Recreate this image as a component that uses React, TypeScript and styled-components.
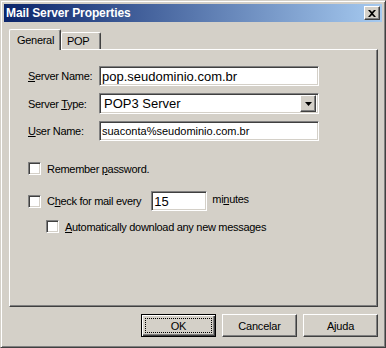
import React from 'react'
import styled, { createGlobalStyle, css } from 'styled-components'

const face = '#d4d0c8'
const shadow = '#808080'
const darkShadow = '#404040'
const uiFont = `'Liberation Sans', Arial, sans-serif`

const GlobalStyle = createGlobalStyle`
	html, body {
		margin: 0;
		padding: 0;
		background: ${face};
	}
	* {
		box-sizing: border-box;
	}
`

const raised = css`
	border: 1px solid;
	border-color: #fff ${darkShadow} ${darkShadow} #fff;
	box-shadow: inset -1px -1px ${shadow}, inset 1px 1px ${face};
`

const sunken = css`
	border: 1px solid;
	border-color: ${shadow} #fff #fff ${shadow};
	box-shadow: inset 1px 1px ${darkShadow}, inset -1px -1px ${face};
`

const Window = styled.div`
	width: 386px;
	height: 348px;
	display: flex;
	flex-direction: column;
	padding: 3px;
	background: ${face};
	border: 1px solid;
	border-color: ${face} ${darkShadow} ${darkShadow} ${face};
	box-shadow: inset 1px 1px #fff, inset -1px -1px ${shadow};
	font-family: ${uiFont};
	font-size: 11px;
	color: #000;
`

const TitleBar = styled.div`
	height: 18px;
	display: flex;
	align-items: center;
	justify-content: space-between;
	padding: 0 2px 0 2px;
	background: linear-gradient(to right, #0a246a, #a6caf0);
`

const TitleText = styled.span`
	color: #fff;
	font-weight: bold;
	font-size: 12px;
	letter-spacing: -0.1px;
`

const CloseButton = styled.button`
	${raised};
	width: 16px;
	height: 14px;
	padding: 0;
	background: ${face};
	display: flex;
	align-items: center;
	justify-content: center;
`

const Body = styled.div`
	flex: 1;
	display: flex;
	flex-direction: column;
	padding: 7px 4px 0 5px;
`

const TabStrip = styled.div`
	display: flex;
	align-items: flex-end;
	height: 20px;
	position: relative;
	z-index: 1;
`

const Tab = styled.div<{ $active?: boolean; $width: number }>`
	width: ${(p) => p.$width}px;
	height: ${(p) => (p.$active ? 21 : 17)}px;
	margin-bottom: ${(p) => (p.$active ? -1 : 0)}px;
	padding: ${(p) => (p.$active ? '4px 0 0 7px' : '2px 0 0 5px')};
	background: ${face};
	border-top: 1px solid #fff;
	border-left: 1px solid #fff;
	border-right: 1px solid ${darkShadow};
	border-top-left-radius: 2px;
	border-top-right-radius: 2px;
	box-shadow: inset -1px 0 ${shadow};
	letter-spacing: -0.3px;
	position: relative;
	z-index: ${(p) => (p.$active ? 2 : 1)};
`

const Panel = styled.div`
	height: 258px;
	padding: 16px 0 0 18px;
	border: 1px solid;
	border-color: #fff ${darkShadow} ${darkShadow} #fff;
	box-shadow: inset -1px -1px ${shadow};
`

const FormGrid = styled.div`
	display: grid;
	grid-template-columns: 71px 220px;
	row-gap: 7px;
	align-items: center;
`

const Label = styled.span`
	letter-spacing: -0.3px;
	white-space: nowrap;
`

const Key = styled.span`
	text-decoration: underline;
`

const TextField = styled.input<{ $size: number; $width?: number }>`
	${sunken};
	width: ${(p) => (p.$width ? `${p.$width}px` : '100%')};
	height: 20px;
	margin: 0;
	padding: 0 2px 0 2px;
	background: #fff;
	font-family: ${uiFont};
	font-size: ${(p) => p.$size}px;
	color: #000;
	outline: none;
`

const IntervalField = styled(TextField)`
	margin-left: 4px;
`

const SelectBox = styled.div`
	${sunken};
	height: 21px;
	display: flex;
	align-items: center;
	justify-content: space-between;
	padding: 2px 2px 2px 4px;
	background: #fff;
	font-size: 13px;
`

const DropButton = styled.span`
	${raised};
	width: 16px;
	height: 17px;
	background: ${face};
	display: flex;
	align-items: center;
	justify-content: center;
`

const Checks = styled.div`
	display: flex;
	flex-direction: column;
	margin-top: 21px;
`

const CheckRow = styled.div<{ $indent?: number; $gap?: number }>`
	display: flex;
	align-items: center;
	gap: 6px;
	margin-left: ${(p) => p.$indent ?? 0}px;
	margin-top: ${(p) => p.$gap ?? 0}px;
	min-height: 13px;
`

const CheckBox = styled.span`
	${sunken};
	width: 13px;
	height: 13px;
	flex: none;
	background: #fff;
`

const MinutesLabel = styled(Label)`
	margin-left: -1px;
	padding-bottom: 4px;
`

const ButtonRow = styled.div`
	display: flex;
	justify-content: flex-end;
	gap: 6px;
	margin-top: 7px;
`

const Button = styled.button<{ $default?: boolean }>`
	width: 75px;
	height: 23px;
	padding: 0;
	background: ${face};
	font-family: ${uiFont};
	font-size: 11px;
	color: #000;
	letter-spacing: -0.2px;
	display: flex;
	align-items: center;
	justify-content: center;
	${(p) =>
		p.$default
			? css`
					border: 1px solid #000;
					box-shadow: inset 1px 1px #fff, inset -1px -1px ${darkShadow}, inset -2px -2px ${shadow};
				`
			: raised};
`

const FocusRing = styled.span`
	width: 67px;
	height: 15px;
	border: 1px dotted #000;
	display: flex;
	align-items: center;
	justify-content: center;
`

const CloseGlyph = () => (
	<svg width='8' height='7' viewBox='0 0 8 7'>
		<path d='M0 0h2l2 2 2-2h2L5 3.5 8 7H6L4 5 2 7H0l3-3.5z' fill='#000' />
	</svg>
)

const ArrowGlyph = () => (
	<svg width='7' height='4' viewBox='0 0 7 4'>
		<path d='M0 0h7L3.5 4z' fill='#000' />
	</svg>
)

export default function App() {
	return (
		<>
			<GlobalStyle />
			<Window>
				<TitleBar>
					<TitleText>Mail Server Properties</TitleText>
					<CloseButton aria-label='Close'>
						<CloseGlyph />
					</CloseButton>
				</TitleBar>
				<Body>
					<TabStrip>
						<Tab $active $width={52}>General</Tab>
						<Tab $width={40}>POP</Tab>
					</TabStrip>
					<Panel>
						<FormGrid>
							<Label>
								<Key>S</Key>erver Name:
							</Label>
							<TextField $size={13} readOnly value='pop.seudominio.com.br' />
							<Label>
								Server <Key>T</Key>ype:
							</Label>
							<SelectBox>
								POP3 Server
								<DropButton>
									<ArrowGlyph />
								</DropButton>
							</SelectBox>
							<Label>
								<Key>U</Key>ser Name:
							</Label>
							<TextField $size={11} readOnly value='suaconta%seudominio.com.br' />
						</FormGrid>
						<Checks>
							<CheckRow>
								<CheckBox />
								<Label>
									Remember <Key>p</Key>assword.
								</Label>
							</CheckRow>
							<CheckRow $gap={16}>
								<CheckBox />
								<Label>
									C<Key>h</Key>eck for mail every
								</Label>
								<IntervalField $size={13} $width={56} readOnly value='15' />
								<MinutesLabel>
									mi<Key>n</Key>utes
								</MinutesLabel>
							</CheckRow>
							<CheckRow $indent={18} $gap={9}>
								<CheckBox />
								<Label>
									<Key>A</Key>utomatically download any new messages
								</Label>
							</CheckRow>
						</Checks>
					</Panel>
					<ButtonRow>
						<Button $default>
							<FocusRing>OK</FocusRing>
						</Button>
						<Button>Cancelar</Button>
						<Button>Ajuda</Button>
					</ButtonRow>
				</Body>
			</Window>
		</>
	)
}
